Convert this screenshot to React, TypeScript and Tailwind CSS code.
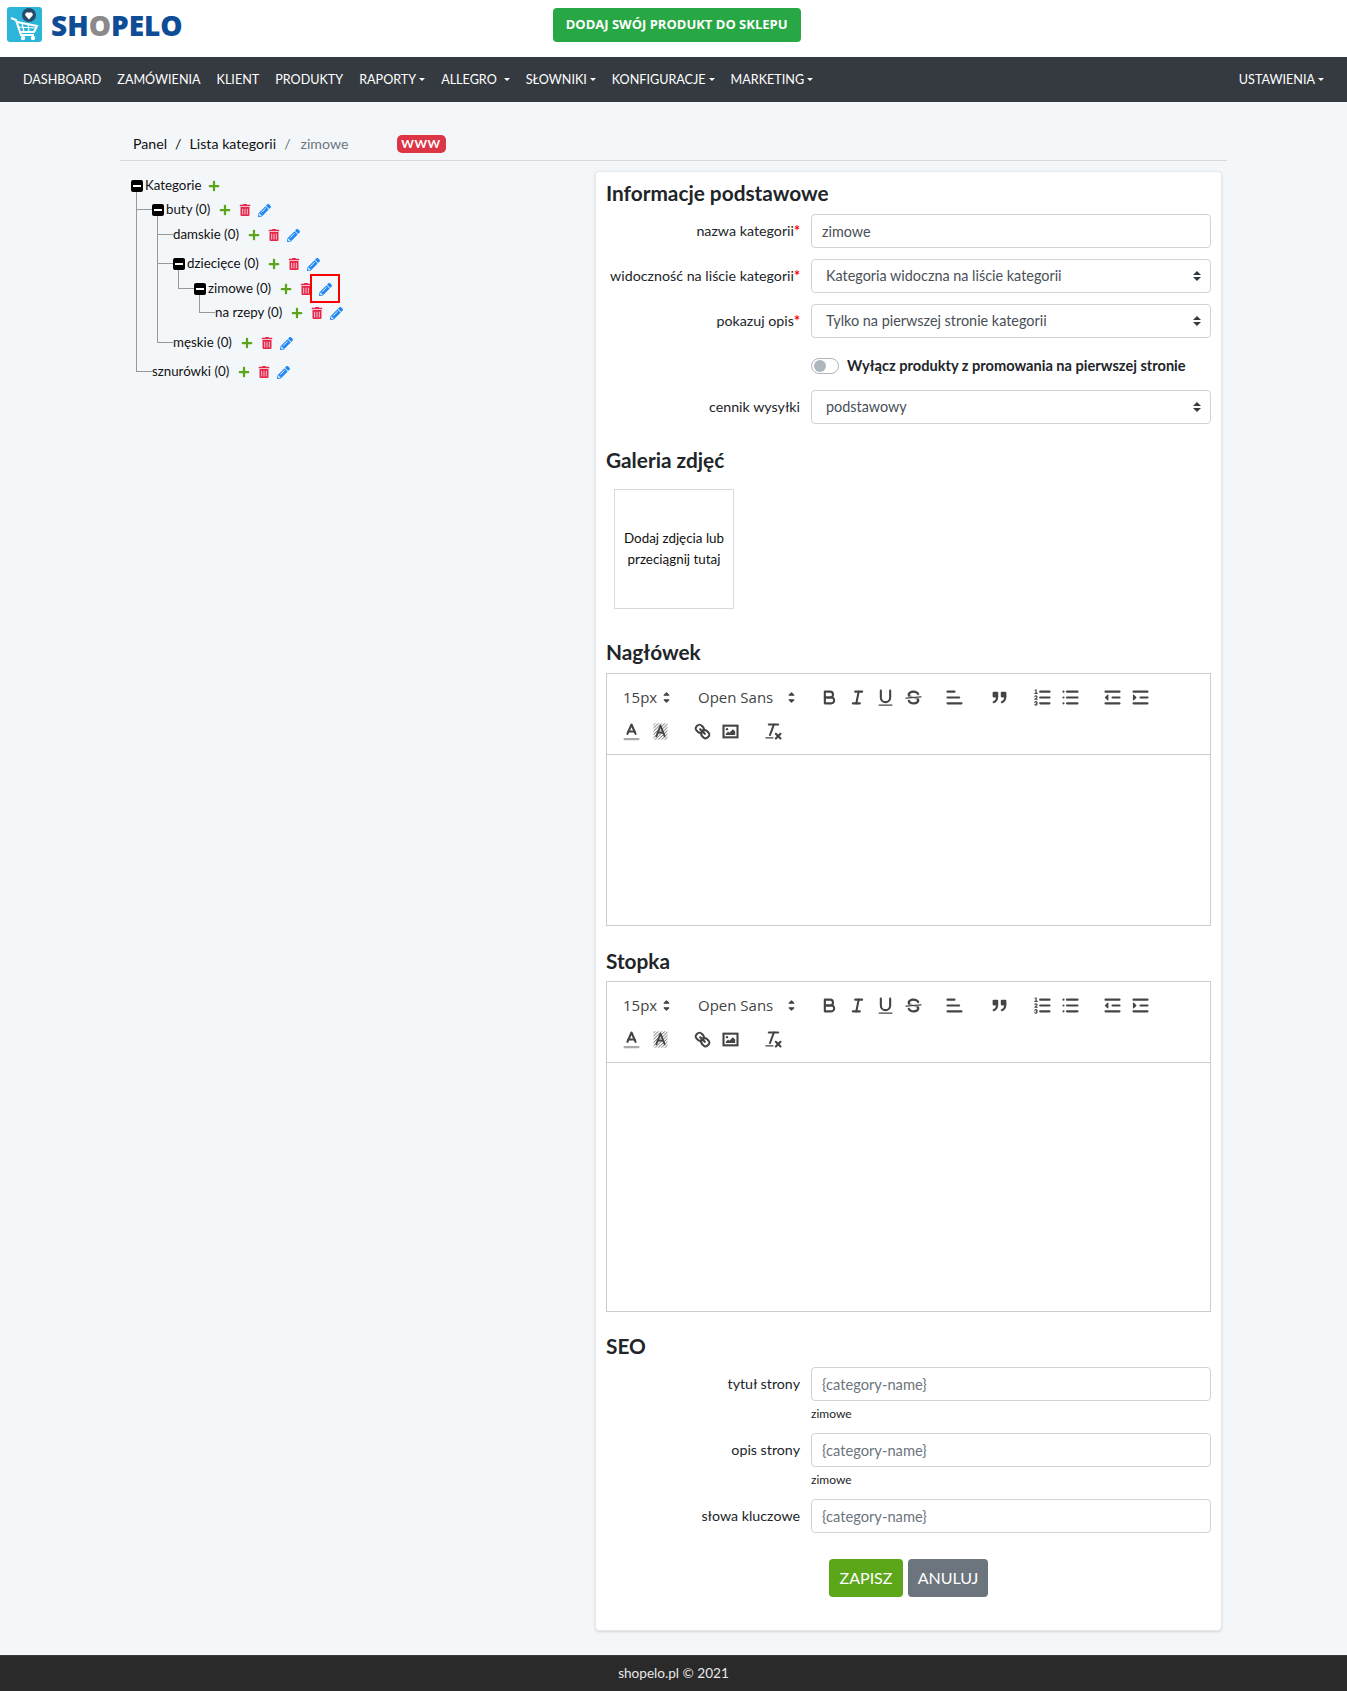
import { ReactNode } from 'react'
import { FaPlus, FaTrashAlt, FaPencilAlt } from 'react-icons/fa'

const NAV_LEFT = [
  { label: 'DASHBOARD' },
  { label: 'ZAMÓWIENIA' },
  { label: 'KLIENT' },
  { label: 'PRODUKTY' },
  { label: 'RAPORTY', caret: true },
  { label: 'ALLEGRO', caret: true, wide: true },
  { label: 'SŁOWNIKI', caret: true },
  { label: 'KONFIGURACJE', caret: true },
  { label: 'MARKETING', caret: true },
]

function Caret({ wide }: { wide?: boolean }) {
  return (
    <span
      className={`${wide ? 'ml-[7px]' : 'ml-[3px]'} inline-block border-x-[3px] border-t-[3px] border-x-transparent border-t-white align-middle`}
    />
  )
}

function Logo() {
  return (
    <div className="flex items-center">
      <svg width="35" height="35" viewBox="0 0 35 35">
        <rect width="35" height="35" rx="3" fill="#2bb5d8" />
        <path d="M4 11l5 2 5 15h13" fill="none" stroke="#fff" strokeWidth="2.2" />
        <path d="M10 15l20 4-3 6-13 0" fill="none" stroke="#fff" strokeWidth="2" />
        <path d="M15 16l2 9M21 17l1 8M12 20l16 1" fill="none" stroke="#fff" strokeWidth="1.2" />
        <circle cx="16" cy="31" r="2.2" fill="#fff" />
        <circle cx="26" cy="31" r="2.2" fill="#fff" />
        <circle cx="22" cy="8" r="7" fill="#274a6b" />
        <path d="M22 12.5l-3.6-4a2.3 2.3 0 0 1 3.6-2.7 2.3 2.3 0 0 1 3.6 2.7z" fill="#fff" />
      </svg>
      <span className="ml-[9px] font-['Open_Sans',sans-serif] text-[28px] leading-none font-extrabold text-[#0f4c96]">
        SH<span className="text-[#8a8a8a]">O</span>PELO
      </span>
    </div>
  )
}

function MinusBox() {
  return (
    <span className="mr-[2px] flex h-[12px] w-[12px] shrink-0 items-center justify-center rounded-[2px] bg-black">
      <span className="h-[2px] w-[8px] bg-white" />
    </span>
  )
}

function RowIcons({ plusOnly, mark }: { plusOnly?: boolean; mark?: boolean }) {
  return (
    <span className={`${plusOnly ? 'ml-[7px]' : 'ml-[9px]'} flex items-center`}>
      <FaPlus size={12} className="text-[#5aa51a]" />
      {!plusOnly && (
        <>
          <FaTrashAlt size={12} className="ml-[8px] text-[#e6274a]" />
          <span className="relative ml-[7px]">
            <FaPencilAlt size={13} className="text-[#1e88f5]" />
            {mark && <span className="absolute -top-[9px] -left-[9px] h-[29px] w-[30px] border-2 border-[#ff0000]" />}
          </span>
        </>
      )}
    </span>
  )
}

// one branch of the category tree, the connector lines hang off the li
function Branch({
  label,
  pad,
  elbow,
  last,
  open,
  mark,
  children,
}: {
  label: string
  pad: string
  elbow: string
  last?: boolean
  open?: boolean
  mark?: boolean
  children?: ReactNode
}) {
  return (
    <li className={`relative pl-[16px] ${pad}`}>
      <span className={`absolute -top-[6px] left-0 w-[16px] border-b border-l border-[#999999] ${elbow}`} />
      {!last && <span className="absolute top-0 bottom-0 left-0 border-l border-[#999999]" />}
      <div className="flex h-[24px] items-center">
        {open && <MinusBox />}
        <span>{label}</span>
        <RowIcons mark={mark} />
      </div>
      {children && <ul className="ml-[5px]">{children}</ul>}
    </li>
  )
}

function CategoryTree() {
  return (
    <div className="ml-[11px] pt-[13px] text-[13.3px] text-[#111111]">
      <div className="flex h-[24px] items-center">
        <MinusBox />
        <span>Kategorie</span>
        <RowIcons plusOnly />
      </div>
      <ul className="ml-[5px]">
        <Branch label="buty (0)" pad="pt-0" elbow="h-[18px]" open>
          <Branch label="damskie (0)" pad="pt-[1px]" elbow="h-[19px]" />
          <Branch label="dziecięce (0)" pad="pt-[5px]" elbow="h-[23px]" open>
            <Branch label="zimowe (0)" pad="pt-[1px]" elbow="h-[19px]" open last mark>
              <Branch label="na rzepy (0)" pad="pt-0" elbow="h-[18px]" last />
            </Branch>
          </Branch>
          <Branch label="męskie (0)" pad="pt-[6px]" elbow="h-[24px]" last />
        </Branch>
        <Branch label="sznurówki (0)" pad="pt-[5px]" elbow="h-[23px]" last />
      </ul>
    </div>
  )
}

function Arrows() {
  return (
    <svg width="8" height="10" viewBox="0 0 4 5" className="absolute top-[12px] right-[10px]">
      <path d="M2 0L0 2h4zm0 5L0 3h4z" fill="#343a40" />
    </svg>
  )
}

function Row({ label, required, children, className }: { label: string; required?: boolean; children: ReactNode; className?: string }) {
  return (
    <div className={`flex items-center ${className ?? 'mb-[11px]'}`}>
      <label className="w-[194px] shrink-0 text-right text-[14.25px] text-[#212529]">
        {label}
        {required && <span className="font-bold text-[#ff0000]">*</span>}
      </label>
      <div className="ml-[11px] flex-1">{children}</div>
    </div>
  )
}

function TextInput({ value, placeholder }: { value?: string; placeholder?: string }) {
  return (
    <input
      readOnly
      value={value}
      placeholder={placeholder}
      className="block h-[34px] w-full rounded-[4px] border border-[#ced4da] bg-white px-[10px] text-[14.4px] text-[#495057] outline-none placeholder:text-[14.7px] placeholder:text-[#6c757d]"
    />
  )
}

function SelectBox({ value }: { value: string }) {
  return (
    <div className="relative">
      <select className="block h-[34px] w-full appearance-none rounded-[4px] border border-[#ced4da] bg-white px-[14px] text-[14.4px] text-[#495057] outline-none">
        <option>{value}</option>
      </select>
      <Arrows />
    </div>
  )
}

function Ico({ children }: { children: ReactNode }) {
  return (
    <span className="flex h-[24px] w-[28px] shrink-0 items-center justify-center">
      <svg width="21" height="21" viewBox="0 0 18 18" fill="none" stroke="#444" strokeWidth="1.8" strokeLinecap="round" strokeLinejoin="round">
        {children}
      </svg>
    </span>
  )
}

function PickerArrows() {
  return (
    <svg width="21" height="21" viewBox="0 0 18 18" fill="#444" stroke="#444" strokeWidth="1" strokeLinejoin="round" className="absolute top-[2px] -right-[2px]">
      <polygon points="7 11 9 13 11 11 7 11" />
      <polygon points="7 7 9 5 11 7 7 7" />
    </svg>
  )
}

function Toolbar() {
  return (
    <div className="border-b border-[#cccccc] px-[8px] pt-[11px] pb-[11px] font-['Open_Sans',sans-serif] text-[15px] text-[#444444]">
      <div className="flex h-[34px] items-start">
        <span className="relative h-[24px] w-[60px] pl-[8px] leading-[24px]">
          15px
          <PickerArrows />
        </span>
        <span className="relative ml-[15px] h-[24px] w-[110px] pl-[8px] leading-[24px]">
          Open Sans
          <PickerArrows />
        </span>
        <span className="ml-[15px] flex">
          <Ico>
            <path d="M5,4H9.5A2.5,2.5,0,0,1,12,6.5v0A2.5,2.5,0,0,1,9.5,9H5A0,0,0,0,1,5,9V4A0,0,0,0,1,5,4Z" />
            <path d="M5,9h5.5A2.5,2.5,0,0,1,13,11.5v0A2.5,2.5,0,0,1,10.5,14H5a0,0,0,0,1,0,0V9A0,0,0,0,1,5,9Z" />
          </Ico>
          <Ico>
            <line x1="7" x2="13" y1="4" y2="4" />
            <line x1="5" x2="11" y1="14" y2="14" />
            <line x1="8" x2="10" y1="14" y2="4" />
          </Ico>
          <Ico>
            <path d="M5,3V9a4.012,4.012,0,0,0,4,4H9a4.012,4.012,0,0,0,4-4V3" />
            <rect x="3" y="15" width="12" height="1" rx="0.5" fill="#444" strokeWidth="0" />
          </Ico>
          <Ico>
            <line x1="15.5" x2="2.5" y1="8.5" y2="9.5" strokeWidth="1" />
            <path fill="#444" stroke="none" d="M9.007,8C6.542,7.791,6,7.519,6,6.5,6,5.792,7.283,5,9,5c1.571,0,2.765.679,2.969,1.309a1,1,0,0,0,1.9-.617C13.356,4.106,11.354,3,9,3,6.2,3,4,4.538,4,6.5a3.2,3.2,0,0,0,.5,1.843Z" />
            <path fill="#444" stroke="none" d="M8.984,10C11.457,10.208,12,10.479,12,11.5c0,.708-1.283,1.5-3,1.5-1.571,0-2.765-.679-2.969-1.309a1,1,0,1,0-1.9.617C4.644,13.894,6.646,15,9,15c2.8,0,5-1.538,5-3.5a3.2,3.2,0,0,0-.5-1.843Z" />
          </Ico>
        </span>
        <span className="ml-[13px]">
          <Ico>
            <line x1="3" x2="15" y1="14" y2="14" />
            <line x1="3" x2="13" y1="9" y2="9" />
            <line x1="3" x2="9" y1="4" y2="4" />
          </Ico>
        </span>
        <span className="ml-[17px]">
          <Ico>
            <rect x="4" y="5" width="3" height="3" fill="#444" />
            <rect x="11" y="5" width="3" height="3" fill="#444" />
            <path d="M7,8c0,4.031-3,5-3,5" />
            <path d="M14,8c0,4.031-3,5-3,5" />
          </Ico>
        </span>
        <span className="ml-[15px] flex">
          <Ico>
            <line x1="7" x2="15" y1="4" y2="4" />
            <line x1="7" x2="15" y1="9" y2="9" />
            <line x1="7" x2="15" y1="14" y2="14" />
            <line x1="2.5" x2="4.5" y1="5.5" y2="5.5" strokeWidth="1" />
            <path fill="#444" stroke="none" d="M3.5,6A0.5,0.5,0,0,1,3,5.5V3.085l-0.276.138A0.5,0.5,0,0,1,2.053,3c-0.124-.247-0.023-0.324.224-0.447l1-.5A0.5,0.5,0,0,1,4,2.5v3A0.5,0.5,0,0,1,3.5,6Z" />
            <path strokeWidth="1" d="M4.5,10.5h-2c0-.234,1.85-1.076,1.85-2.234A0.959,0.959,0,0,0,2.5,8.156" />
            <path strokeWidth="1" d="M2.5,14.846a0.959,0.959,0,0,0,1.85-.109A0.7,0.7,0,0,0,3.75,14a0.688,0.688,0,0,0,.6-0.736,0.959,0.959,0,0,0-1.85-.109" />
          </Ico>
          <Ico>
            <line x1="6" x2="15" y1="4" y2="4" />
            <line x1="6" x2="15" y1="9" y2="9" />
            <line x1="6" x2="15" y1="14" y2="14" />
            <line x1="3" x2="3" y1="4" y2="4" />
            <line x1="3" x2="3" y1="9" y2="9" />
            <line x1="3" x2="3" y1="14" y2="14" />
          </Ico>
        </span>
        <span className="ml-[14px] flex">
          <Ico>
            <line x1="3" x2="15" y1="14" y2="14" />
            <line x1="3" x2="15" y1="4" y2="4" />
            <line x1="9" x2="15" y1="9" y2="9" />
            <polygon points="5 7 5 11 3 9 5 7" fill="#444" strokeWidth="1" />
          </Ico>
          <Ico>
            <line x1="3" x2="15" y1="14" y2="14" />
            <line x1="3" x2="15" y1="4" y2="4" />
            <line x1="9" x2="15" y1="9" y2="9" />
            <polygon points="3 7 3 11 5 9 3 7" fill="#444" strokeWidth="1" />
          </Ico>
        </span>
      </div>
      <div className="flex h-[24px] items-start pl-[2px]">
        <Ico>
          <line x1="3" x2="15" y1="15.5" y2="15.5" stroke="#aaa" />
          <polyline points="5.5 11 9 3 12.5 11" />
          <line x1="11.63" x2="6.38" y1="9" y2="9" />
        </Ico>
        <span className="ml-[1px]">
          <Ico>
            <defs>
              <pattern id="hatch" width="2" height="2" patternUnits="userSpaceOnUse" patternTransform="rotate(45)">
                <rect width="0.8" height="2" fill="#888" stroke="none" />
              </pattern>
            </defs>
            <rect x="3" y="2" width="12" height="14" fill="url(#hatch)" stroke="none" />
            <polyline points="5.5 13 9 4 12.5 13" strokeWidth="1.6" />
            <line x1="11.4" x2="6.6" y1="10" y2="10" strokeWidth="1.6" />
          </Ico>
        </span>
        <span className="ml-[14px] flex">
          <Ico>
            <line x1="7" x2="11" y1="7" y2="11" />
            <path d="M8.9,4.577a3.476,3.476,0,0,1,.36,4.679A3.476,3.476,0,0,1,4.577,8.9C3.185,7.5,2.035,6.4,4.217,4.217S7.5,3.185,8.9,4.577Z" />
            <path d="M13.423,9.1a3.476,3.476,0,0,0-4.679-.36,3.476,3.476,0,0,0,.36,4.679c1.392,1.392,2.5,2.542,4.679.36S14.815,10.5,13.423,9.1Z" />
          </Ico>
          <Ico>
            <rect x="3" y="4" width="12" height="10" strokeLinejoin="miter" />
            <circle cx="6" cy="7" r="1" fill="#444" stroke="none" />
            <polyline points="5 12 5 11 7 9 8 10 11 7 13 9 13 12 5 12" fill="#444" stroke="none" />
          </Ico>
        </span>
        <span className="ml-[15px]">
          <Ico>
            <line x1="5" x2="13" y1="3" y2="3" />
            <line x1="6" x2="9.35" y1="12" y2="3" />
            <line x1="11" x2="15" y1="11" y2="15" />
            <line x1="15" x2="11" y1="11" y2="15" />
            <rect x="2" y="14" width="7" height="1" rx="0.5" fill="#444" stroke="none" />
          </Ico>
        </span>
      </div>
    </div>
  )
}

function Editor({ height }: { height: string }) {
  return (
    <div className="border border-[#cccccc]">
      <Toolbar />
      <div className={`bg-white ${height}`} />
    </div>
  )
}

function Heading({ children, className }: { children: ReactNode; className: string }) {
  return <h2 className={`h-[24px] text-[20.8px] leading-[24px] font-bold text-[#212529] ${className}`}>{children}</h2>
}

export default function App() {
  return (
    <div className="flex min-h-[1691px] flex-col bg-[#f4f7fa] font-[Lato,sans-serif]">
      <header className="flex h-[57px] items-start bg-white pt-[7px] pl-[7px]">
        <Logo />
        <button className="mt-[1px] ml-[370px] h-[34px] w-[248px] rounded-[4px] bg-[#28a745] font-['Open_Sans',sans-serif] text-[13px] font-bold text-white">
          DODAJ SWÓJ PRODUKT DO SKLEPU
        </button>
      </header>

      <nav className="flex h-[45px] items-center justify-between bg-[#343a40] pt-[1px] pr-[23px] pl-[23px] text-[12.6px] text-white">
        <div className="flex items-center gap-[16px]">
          {NAV_LEFT.map((item) => (
            <span key={item.label} className="flex items-center">
              {item.label}
              {item.caret && <Caret wide={item.wide} />}
            </span>
          ))}
        </div>
        <span className="flex items-center">
          USTAWIENIA
          <Caret />
        </span>
      </nav>

      <main className="mx-[120px] flex-1">
        <div className="flex h-[59px] items-center border-b border-[#d8d8d8] pt-[26px] pl-[13px] text-[14.2px] text-[#111111]">
          <span>Panel</span>
          <span className="mx-[8px]">/</span>
          <span>Lista kategorii</span>
          <span className="mx-[8px] text-[#6c757d]">/</span>
          <span className="ml-[2px] text-[#6c757d]">zimowe</span>
          <span className="ml-[48px] flex h-[18px] w-[49px] items-center justify-center rounded-[5px] bg-[#dc3545] text-[12px] font-bold tracking-[0.5px] text-white">
            WWW
          </span>
        </div>

        <div className="flex items-start">
          <div className="w-[475px]">
            <CategoryTree />
          </div>
          <section className="mt-[10px] w-[627px] rounded-[4px] border border-[#e6e8eb] bg-white pt-[9px] pr-[10px] pb-[33px] pl-[10px] shadow-sm">
            <Heading className="mb-[9px]">Informacje podstawowe</Heading>
            <Row label="nazwa kategorii" required>
              <TextInput value="zimowe" />
            </Row>
            <Row label="widoczność na liście kategorii" required>
              <SelectBox value="Kategoria widoczna na liście kategorii" />
            </Row>
            <Row label="pokazuj opis" required>
              <SelectBox value="Tylko na pierwszej stronie kategorii" />
            </Row>
            <div className="mb-[7px] flex h-[34px] items-center pl-[205px]">
              <span className="flex h-[16px] w-[28px] items-center rounded-full border border-[#adb5bd] bg-white pl-[2px]">
                <span className="h-[12px] w-[12px] rounded-full bg-[#adb5bd]" />
              </span>
              <span className="ml-[8px] text-[14.6px] font-bold text-[#212529]">Wyłącz produkty z promowania na pierwszej stronie</span>
            </div>
            <Row label="cennik wysyłki" className="mb-[24px]">
              <SelectBox value="podstawowy" />
            </Row>

            <Heading className="mb-[17px]">Galeria zdjęć</Heading>
            <div className="ml-[8px] flex h-[120px] w-[120px] items-center justify-center border border-[#d9d9d9] text-center text-[13.4px] leading-[21px] text-[#111111]">
              Dodaj zdjęcia lub przeciągnij tutaj
            </div>

            <Heading className="mt-[31px] mb-[9px]">Nagłówek</Heading>
            <Editor height="h-[170px]" />

            <Heading className="mt-[23px] mb-[8px]">Stopka</Heading>
            <Editor height="h-[248px]" />

            <Heading className="mt-[22px] mb-[9px]">SEO</Heading>
            <Row label="tytuł strony" className="mb-0">
              <TextInput placeholder="{category-name}" />
            </Row>
            <p className="mt-[4px] mb-[10px] h-[18px] pl-[205px] text-[12px] leading-[18px] text-[#212529]">zimowe</p>
            <Row label="opis strony" className="mb-0">
              <TextInput placeholder="{category-name}" />
            </Row>
            <p className="mt-[4px] mb-[10px] h-[18px] pl-[205px] text-[12px] leading-[18px] text-[#212529]">zimowe</p>
            <Row label="słowa kluczowe" className="mb-0">
              <TextInput placeholder="{category-name}" />
            </Row>

            <div className="mt-[26px] flex justify-center gap-[5px]">
              <button className="h-[38px] w-[74px] rounded-[4px] bg-[#5ca61a] text-[16px] text-white">ZAPISZ</button>
              <button className="h-[38px] w-[80px] rounded-[4px] bg-[#6c757d] text-[16px] text-white">ANULUJ</button>
            </div>
          </section>
        </div>
      </main>

      <footer className="mt-[24px] flex h-[36px] items-center justify-center border-t border-[#3a3a3a] bg-[#2a2a2a] text-[13.6px] text-[#e8e8e8]">
        shopelo.pl © 2021
      </footer>
    </div>
  )
}
